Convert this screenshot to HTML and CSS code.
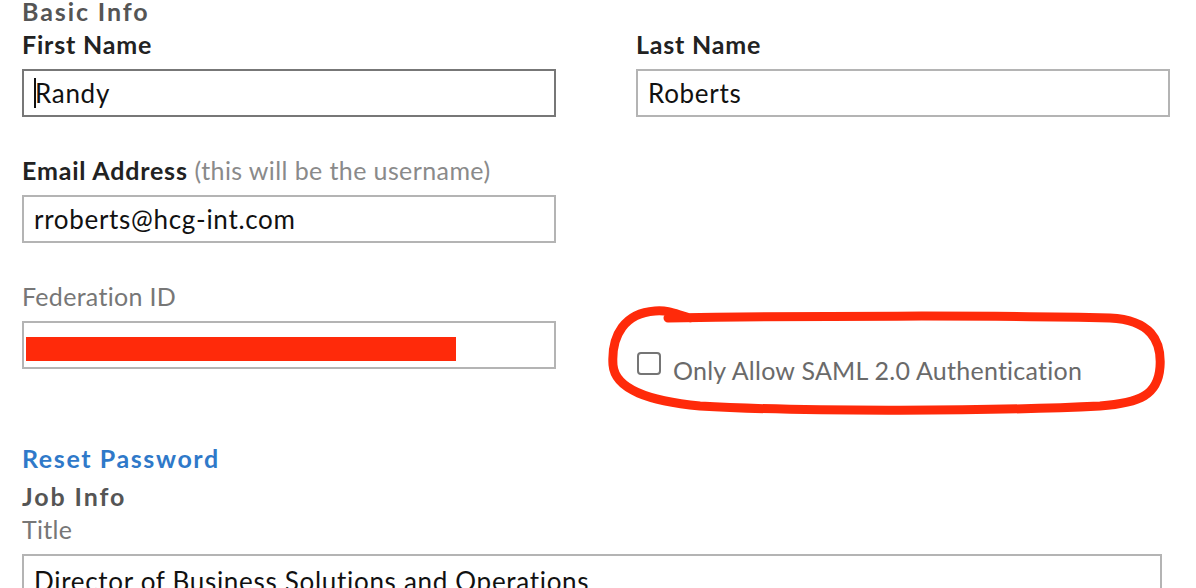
FILE: index.html
```html
<!DOCTYPE html>
<html lang="en">
<head>
<meta charset="utf-8">
<title>Basic Info</title>
<link rel="stylesheet" href="styles.css">
</head>
<body>
<div class="page">
  <h2 class="section">Basic Info</h2>
  <div class="grid">
    <div class="field">
      <label class="label">First Name</label>
      <div class="input focused"><span class="caret"></span>Randy</div>
    </div>
    <div class="field">
      <label class="label">Last Name</label>
      <div class="input">Roberts</div>
    </div>
    <div class="field">
      <label class="label">Email Address <span class="hint">(this will be the username)</span></label>
      <div class="input">rroberts@hcg-int.com</div>
    </div>
    <div class="field"></div>
    <div class="field">
      <label class="label light">Federation ID</label>
      <div class="input"><span class="redact"></span></div>
    </div>
    <div class="field">
      <label class="check"><span class="box"></span>Only Allow SAML 2.0 Authentication</label>
    </div>
  </div>
  <a class="reset" href="#">Reset Password</a>
  <h2 class="section job">Job Info</h2>
  <label class="label light title-label">Title</label>
  <div class="input wide">Director of Business Solutions and Operations</div>
</div>
<svg class="annot" width="1196" height="588" viewBox="0 0 1196 588">
  <path d="M 668 318 C 800 316, 1000 315, 1110 318 C 1150 320, 1162 340, 1160 367 C 1158 395, 1140 403, 1100 406 C 1000 411, 800 412, 700 406 C 650 401, 615 390, 613 365 C 611 335, 625 313, 655 311 C 670 310, 675 314, 690 318" fill="none" stroke="#ff2a0a" stroke-width="9" stroke-linecap="round" stroke-linejoin="round"/>
</svg>
</body>
</html>
```
FILE: styles.css
```css
html, body {
  margin: 0;
  padding: 0;
  background: #ffffff;
}
body {
  font-family: Lato, "Open Sans", Arial, sans-serif;
  color: #1a1a1a;
  width: 1196px;
  height: 588px;
  overflow: hidden;
  position: relative;
}
.page {
  padding: 0 0 0 22px;
}
.section {
  margin: 0;
  font-size: 25px;
  font-weight: 700;
  color: #555555;
  line-height: 22px;
  letter-spacing: 1.9px;
}
.grid {
  display: grid;
  grid-template-columns: 534px 534px;
  column-gap: 80px;
  row-gap: 39px;
  margin-top: 8px;
}
.field {
  display: flex;
  flex-direction: column;
}
.label {
  display: block;
  font-size: 25px;
  font-weight: 700;
  line-height: 28px;
  color: #222222;
  letter-spacing: 0.8px;
}
.label.light {
  font-weight: 400;
  color: #777777;
  letter-spacing: 0.3px;
}
.hint {
  font-weight: 400;
  color: #8a8a8a;
  letter-spacing: 0.4px;
}
.input {
  margin-top: 11px;
  height: 44px;
  border: 2px solid #b4b4b4;
  box-sizing: content-box;
  padding: 0 10px;
  font-size: 26px;
  line-height: 44px;
  letter-spacing: 0.7px;
  color: #111111;
  display: flex;
  align-items: center;
  white-space: nowrap;
  overflow: hidden;
}
.input.focused {
  border-color: #777777;
}
.caret {
  display: inline-block;
  width: 2px;
  height: 30px;
  background: #111111;
  margin-right: -1px;
}
.redact {
  display: block;
  width: 430px;
  height: 24px;
  background: #ff2a0a;
  margin-left: -8px;
  margin-top: 8px;
}
.check {
  display: flex;
  align-items: flex-start;
  gap: 12px;
  margin-top: 74px;
  margin-bottom: -15px;
  font-size: 25px;
  color: #6a6a6a;
  line-height: 28px;
  letter-spacing: 0.25px;
  padding-left: 1px;
}
.box {
  width: 20px;
  height: 19px;
  border: 2px solid #757575;
  border-radius: 4px;
  box-sizing: content-box;
  margin-top: -4px;
  flex: none;
}
.reset {
  display: block;
  margin-top: 75px;
  font-size: 25px;
  font-weight: 700;
  line-height: 28px;
  letter-spacing: 1.6px;
  color: #2f79c9;
  text-decoration: none;
}
.section.job {
  margin-top: 10px;
  line-height: 28px;
}
.title-label {
  margin-top: 5px;
  color: #777777;
}
.input.wide {
  width: 1116px;
  padding-top: 3px;
}
.annot {
  position: absolute;
  left: 0;
  top: 0;
  pointer-events: none;
}
```
